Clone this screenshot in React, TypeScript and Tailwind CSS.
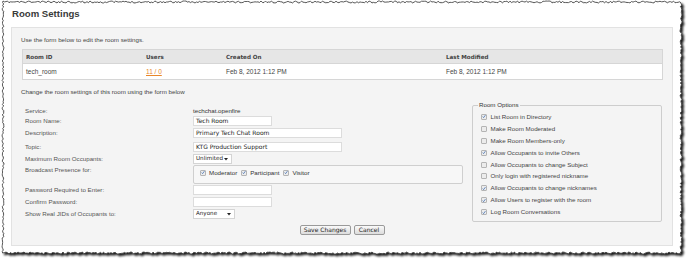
import React from "react";

function rng(seed: number) {
  let s = seed;
  return () => {
    s = (s * 16807) % 2147483647;
    return (s - 1) / 2147483646;
  };
}

function tornPath() {
  const r = rng(11);
  const pts: [number, number][] = [];
  const L = 3, T = 2, R = 681, B = 253;
  for (let x = L; x < R; x += 1.5) pts.push([x, T + (r() - 0.5) * 2]);
  for (let y = T; y < B; y += 1.5) pts.push([R + (r() - 0.5) * 2, y]);
  for (let x = R; x > L; x -= 1.5) pts.push([x, B + (r() - 0.5) * 2]);
  for (let y = B; y > T; y -= 1.5) pts.push([L + (r() - 0.5) * 2, y]);
  return "M" + pts.map((p) => p[0].toFixed(2) + " " + p[1].toFixed(2)).join(" L") + " Z";
}

function Check({ on }: { on: boolean }) {
  return (
    <span className="inline-flex w-[6px] h-[6px] shrink-0 items-center justify-center border border-[#b4b4b4] bg-[#ececec] rounded-[1px]">
      {on && (
        <svg width="5" height="5" viewBox="0 0 5 5">
          <path d="M0.8 2.6 L2 3.9 L4.3 0.8" fill="none" stroke="#3566b0" strokeWidth="0.9" />
        </svg>
      )}
    </span>
  );
}

function Input({ w, value }: { w: string; value?: string }) {
  return (
    <div className={`${w} h-[10px] bg-white border border-[#dcdcdc] flex items-center pl-[2px] text-[6px] text-[#222] font-['DejaVu_Sans',sans-serif] leading-none`}>
      {value}
    </div>
  );
}

function Select({ w, value }: { w: string; value: string }) {
  return (
    <div className={`${w} h-[10px] bg-white border border-[#d4d4d4] flex items-center justify-between pl-[2px] pr-[3px] text-[5.6px] text-[#222] font-['DejaVu_Sans',sans-serif] leading-none`}>
      <span>{value}</span>
      <svg width="4" height="3" viewBox="0 0 4 3">
        <path d="M0 0 L4 0 L2 2.5 Z" fill="#222" />
      </svg>
    </div>
  );
}

const rows: { label: string; h: string; node: React.ReactNode; top?: boolean }[] = [
  { label: "Service:", h: "h-[9px]", node: <span className="text-[#333]">techchat.openfire</span> },
  { label: "Room Name:", h: "h-[11px]", node: <Input w="w-[79px]" value="Tech Room" /> },
  { label: "Description:", h: "h-[14px]", node: <Input w="w-[149px]" value="Primary Tech Chat Room" /> },
  { label: "Topic:", h: "h-[13px]", node: <Input w="w-[149px]" value="KTG Production Support" /> },
  { label: "Maximum Room Occupants:", h: "h-[12px]", node: <Select w="w-[39px]" value="Unlimited" /> },
  {
    label: "Broadcast Presence for:",
    h: "h-[19px]",
    top: true,
    node: (
      <div className="w-[270px] h-[19px] border border-[#cfcfcf] rounded-[2px] bg-[#f7f7f7] flex items-start pl-[6px] pt-[3px] gap-[4px] text-[#333]">
        {["Moderator", "Participant", "Visitor"].map((t) => (
          <span key={t} className="flex items-center gap-[3px] h-[7px]">
            <Check on />
            <span>{t}</span>
          </span>
        ))}
      </div>
    ),
  },
  { label: "Password Required to Enter:", h: "h-[12px]", node: <Input w="w-[79px]" /> },
  { label: "Confirm Password:", h: "h-[12px]", node: <Input w="w-[79px]" /> },
  { label: "Show Real JIDs of Occupants to:", h: "h-[12px]", node: <Select w="w-[42px]" value="Anyone" /> },
];

const options: [string, boolean][] = [
  ["List Room in Directory", true],
  ["Make Room Moderated", false],
  ["Make Room Members-only", false],
  ["Allow Occupants to invite Others", true],
  ["Allow Occupants to change Subject", false],
  ["Only login with registered nickname", false],
  ["Allow Occupants to change nicknames", true],
  ["Allow Users to register with the room", true],
  ["Log Room Conversations", true],
];

export default function App() {
  return (
    <div className="relative w-[690px] h-[267px] bg-white overflow-hidden font-['Liberation_Sans',Arial,sans-serif] text-[6.2px] leading-[8px] text-[#444]">
      <svg className="absolute inset-0" width="690" height="267" viewBox="0 0 690 267">
        <defs>
          <filter id="sh" x="-5%" y="-5%" width="110%" height="110%">
            <feDropShadow dx="2" dy="2" stdDeviation="0.8" floodColor="#000" floodOpacity="0.9" />
          </filter>
        </defs>
        <path d={tornPath()} fill="#fff" stroke="#333" strokeWidth="0.8" filter="url(#sh)" />
      </svg>

      <div className="relative pl-[11px] pt-[9px]">
        <h1 className="h-[18px] pl-[1px] text-[9.6px] leading-[10px] font-bold text-[#3a3a3a]">Room Settings</h1>

        <div className="w-[662px] h-[219px] bg-[#f4f4f4] border border-[#e2e2e2] pl-[9px] pr-[9px] pt-[8px]">
          <p className="h-[8px]">Use the form below to edit the room settings.</p>

          <div className="mt-[5px] ml-[1px] w-[641px] border border-[#d6d6d6] bg-white">
            <div className="h-[14px] bg-[#e6e6e6] border-b border-[#d6d6d6] flex items-center font-['DejaVu_Sans',sans-serif] font-bold text-[5.6px] text-[#444]">
              <span className="w-[120px] pl-[3px]">Room ID</span>
              <span className="w-[80px] pl-[3px]">Users</span>
              <span className="w-[220px] pl-[3px]">Created On</span>
              <span className="pl-[3px]">Last Modified</span>
            </div>
            <div className="h-[15px] flex items-center text-[6.5px] text-[#444]">
              <span className="w-[120px] pl-[3px]">tech_room</span>
              <span className="w-[80px] pl-[3px]">
                <span className="text-[#e8862a] underline">11 / 0</span>
              </span>
              <span className="w-[220px] pl-[3px]">Feb 8, 2012 1:12 PM</span>
              <span className="pl-[3px]">Feb 8, 2012 1:12 PM</span>
            </div>
          </div>

          <p className="mt-[8px] h-[8px]">Change the room settings of this room using the form below</p>

          <div className="mt-[5px] flex items-start">
            <div className="flex-1 pl-[4px] pt-[5px]">
              {rows.map((r) => (
                <div key={r.label} className={`flex ${r.top ? "items-start" : "items-center"} ${r.h}`}>
                  <span className={`w-[168px] shrink-0 text-[#555] ${r.top ? "pt-[1px]" : ""}`}>{r.label}</span>
                  {r.node}
                </div>
              ))}
            </div>

            <fieldset className="w-[190px] mr-[1px] border border-[#cdcdcd] rounded-[2px] px-[8px] pb-[3px] pt-[2px]">
              <legend className="px-[1px] -ml-[3px] text-[#333] leading-[8px]">Room Options</legend>
              {options.map(([t, on]) => (
                <div key={t} className="h-[11.9px] flex items-center gap-[3.5px]">
                  <Check on={on} />
                  <span className="text-[#444]">{t}</span>
                </div>
              ))}
            </fieldset>
          </div>

          <div className="mt-[3px] flex justify-center gap-[3px]">
            <button className="w-[51px] h-[10px] rounded-[2px] border border-[#9a9a9a] bg-gradient-to-b from-[#fafafa] to-[#dcdcdc] text-[6px] leading-none text-[#222] font-['DejaVu_Sans',sans-serif]">
              Save Changes
            </button>
            <button className="w-[31px] h-[10px] rounded-[2px] border border-[#9a9a9a] bg-gradient-to-b from-[#fafafa] to-[#dcdcdc] text-[6px] leading-none text-[#222] font-['DejaVu_Sans',sans-serif]">
              Cancel
            </button>
          </div>
        </div>
      </div>
    </div>
  );
}
